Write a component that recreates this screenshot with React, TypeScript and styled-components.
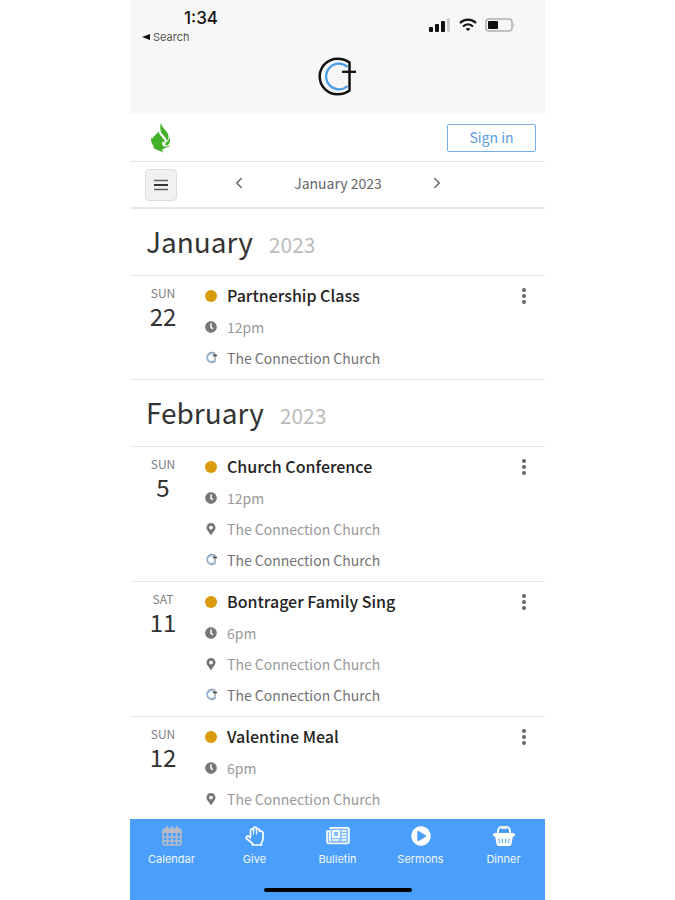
import React from "react";
import styled, { createGlobalStyle } from "styled-components";
import { FaClock, FaMapMarkerAlt, FaPlayCircle } from "react-icons/fa";
import { ChevronLeft, ChevronRight } from "lucide-react";

const GlobalStyle = createGlobalStyle`
  * { box-sizing: border-box; }
  body {
    margin: 0;
    background: #fff;
    font-family: "Noto Sans CJK JP", "Noto Sans", sans-serif;
    color: #222;
  }
  button { font: inherit; color: inherit; background: none; border: 0; padding: 0; cursor: pointer; }
  h1, h2, h3, p { margin: 0; font-weight: 400; }
  svg { display: block; }
`;

const Shell = styled.div`
  max-width: 415px;
  height: 100vh;
  margin: 0 auto;
  display: flex;
  flex-direction: column;
`;

const TopArea = styled.header`
  background: #f7f7f7;
  height: 114px;
  flex: none;
  padding: 8px 30px 0 12px;
  font-family: Inter, sans-serif;
`;

const StatusRow = styled.div`
  display: flex;
  justify-content: space-between;
  height: 36px;
`;

const Clock = styled.div`
  padding-left: 42px;
  font-size: 17px;
  line-height: 20px;
  font-weight: 500;
  color: #111;
`;

const BackLink = styled.a`
  display: flex;
  align-items: center;
  gap: 3px;
  font-size: 11px;
  line-height: 18px;
  color: #555;
  text-decoration: none;
`;

const Signals = styled.div`
  display: flex;
  gap: 8px;
  padding-top: 10px;
`;

const LogoWrap = styled.div`
  display: flex;
  justify-content: center;
  padding: 13px 0 0 18px;
`;

const BrandBar = styled.div`
  flex: none;
  display: flex;
  justify-content: space-between;
  align-items: center;
  height: 48px;
  padding: 0 9px 0 20px;
  border-bottom: 1px solid #e2e2e2;
`;

const SignIn = styled.button`
  && {
    width: 89px;
    height: 28px;
    padding-bottom: 2px;
    border: 1px solid #75aeea;
    border-radius: 2px;
    color: #5a9de2;
    font-size: 14px;
    line-height: 24px;
  }
`;

const MonthBar = styled.nav`
  flex: none;
  display: flex;
  align-items: center;
  height: 47px;
  padding: 0 15px;
  border-bottom: 2px solid #e8e8e8;
  color: #666;
`;

const MenuButton = styled.button`
  && {
    display: grid;
    place-items: center;
    width: 32px;
    height: 32px;
    background: #f1f1f1;
    border: 1px solid #dcdcdc;
    border-radius: 4px;
    color: #333;
  }
`;

const MonthPicker = styled.div`
  display: flex;
  align-items: center;
  justify-content: space-between;
  width: 216px;
  margin-left: 53px;
  padding-bottom: 4px;
  font-size: 14px;
  line-height: 20px;
`;

const List = styled.main`
  flex: 1;
  min-height: 0;
  overflow-y: auto;
  scrollbar-width: none;
`;

const MonthTitle = styled.h2`
  display: flex;
  align-items: baseline;
  gap: 16px;
  height: 67px;
  padding: 0 16px;
  border-bottom: 1px solid #e8e8e8;
  font-size: 28px;
  line-height: 64px;
  color: #333;
`;

const Year = styled.span`
  font-size: 21px;
  color: #bbb;
`;

const EventRow = styled.article`
  display: flex;
  padding: 4px 14px 6px 16px;
  border-bottom: 1px solid #e8e8e8;
`;

const DateBox = styled.div`
  width: 34px;
  margin-right: 24px;
  text-align: center;
`;

const Weekday = styled.div`
  padding-top: 4px;
  font-size: 12px;
  line-height: 18px;
  color: #808080;
`;

const Day = styled.div`
  font-size: 24px;
  line-height: 28px;
  color: #333;
`;

const Details = styled.div`
  flex: 1;
`;

const Line = styled.div<{ $tone: string }>`
  display: flex;
  align-items: center;
  gap: 9px;
  height: 31px;
  font-size: 14px;
  line-height: 22px;
  color: ${(p) => p.$tone};
`;

const IconSlot = styled.span`
  display: grid;
  place-items: center;
  width: 14px;
  color: #777;
`;

const Dot = styled.span`
  width: 12px;
  height: 12px;
  border-radius: 50%;
  background: #d99a0b;
`;

const EventName = styled.h3`
  padding-bottom: 2px;
  font-size: 16px;
  font-weight: 500;
`;

const MoreButton = styled.button`
  && {
    display: grid;
    place-items: center;
    width: 14px;
    height: 31px;
    color: #666;
  }
`;

const TabBar = styled.nav`
  flex: none;
  height: 81px;
  background: #4a9ffc;
  font-family: Inter, sans-serif;
`;

const Tabs = styled.div`
  display: grid;
  grid-template-columns: repeat(5, 1fr);
  height: 69px;
`;

const Tab = styled.a<{ $active?: boolean }>`
  display: flex;
  flex-direction: column;
  align-items: center;
  gap: 5px;
  padding-top: 7px;
  color: #f2f8ff;
  text-decoration: none;
  font-size: 11px;
  line-height: 16px;
  svg { color: ${(p) => (p.$active ? "#b9bcc8" : "#fff")}; }
`;

const HomeIndicator = styled.div`
  width: 148px;
  height: 4px;
  margin: 0 auto;
  border-radius: 2px;
  background: #000;
`;

const ChurchLogo = () => (
  <svg width="39" height="39" viewBox="0 0 39 39" fill="none" role="img" aria-label="The Connection Church">
    <path d="M31.500 5.500C28 2.800 24 1.700 19.500 1.700A17.800 17.800 0 1 0 19.500 37.300C24 37.300 28 36.200 31.500 33.500Z" stroke="#111" strokeWidth="2.500" strokeLinejoin="round" />
    <path d="M29.500 10A12.800 12.800 0 1 0 29.500 29" stroke="#4a9be8" strokeWidth="2.300" />
    <path d="M24 14.800H38" stroke="#111" strokeWidth="2.300" />
  </svg>
);

const Flame = () => (
  <svg width="22" height="30" viewBox="0 0 22 30" fill="#43b02a" role="img" aria-label="Flame">
    <path d="M11 0C12.500 6 18 8 18.500 13C18.700 15 18 17 17 18C16 13.500 11.500 12 10.500 7.500C10 4.500 10.300 2 11 0Z" />
    <path d="M8.500 8C9 13 14.500 14.500 15 19.500C12.500 17.500 11.500 20 12.500 22C13.500 24 17 24.500 20 22C19 25 15 24.500 13 26C12 27 12.500 28.500 13 30C10.500 27 5.500 27.500 3 24L4 23.500C1.500 21 .5 18 1.500 14.500L3 15.500C3 12.500 7.500 11.500 8.500 8Z" />
    <path d="M19.500 14C20.800 17.500 20 21 17 22.500C15 22.500 14.500 21 15.800 19.800C18 18 19.300 17 19.500 14Z" />
  </svg>
);

const MiniLogo = () => (
  <svg width="12" height="13" viewBox="0 0 12 13" fill="none" aria-hidden="true">
    <path d="M10 2.500A5 5 0 1 0 10 10.500Z" stroke="#979da6" strokeWidth="1.400" strokeLinejoin="round" />
    <path d="M9 4A3.800 3.800 0 1 0 9 9.500" stroke="#8dbbe8" strokeWidth="1.200" />
    <path d="M8 4.500H12" stroke="#444" strokeWidth="1.500" />
  </svg>
);

const CalendarIcon = () => (
  <svg width="20" height="20" viewBox="0 0 20 20" fill="none" stroke="currentColor" aria-hidden="true">
    <rect x="1" y="3" width="18" height="16" rx="1.500" strokeWidth="1.500" />
    <path d="M1 3.500H19V7H1Z" fill="currentColor" stroke="none" />
    <path d="M5 1.500V5M10 1.500V5M15 1.500V5" strokeWidth="2.400" strokeLinecap="round" />
    <path d="M5.500 7V19M10 7V19M14.500 7V19M1 11H19M1 15H19" strokeWidth="1.500" />
  </svg>
);

const HandIcon = () => (
  <svg width="20" height="20" viewBox="0 0 20 20" fill="none" stroke="currentColor" strokeWidth="1.700" strokeLinecap="round" strokeLinejoin="round" aria-hidden="true">
    <path d="M5.500 11V4.500Q5.500 3 7 3Q8.500 3 8.500 4V2.500Q8.500 1 10 1Q11.500 1 11.500 2.500V3.500Q12 2.500 13.200 2.800Q14.500 3 14.500 4.500V5.500Q15.500 4.700 16.700 5.200Q18 5.800 18 7V12.500Q18 15 16.500 16.500V19H7.500V17.500L1.500 12.500Q.7 11.500 1.700 10.500Q2.700 9.700 4 10.500L5.500 12" />
    <path d="M8.500 4V8M11.500 3.500V8" strokeWidth="1.200" />
  </svg>
);

const BulletinIcon = () => (
  <svg width="24" height="20" viewBox="0 0 24 20" fill="none" stroke="currentColor" aria-hidden="true">
    <path d="M4 3Q4 1.800 5.200 1.800H21.500Q23 1.800 23 3.300V15.500Q23 17.500 21 17.500H3Q1 17.500 1 15.500V5H4V15.500" strokeWidth="1.600" fill="#ffffff55" />
    <rect x="7" y="5" width="6" height="6" strokeWidth="1.800" />
    <path d="M15.500 5H20.500M15.500 8H20.500M15.500 11H20.500M6.500 14H13M15.500 14H20.500" strokeWidth="1.700" />
  </svg>
);

const BasketIcon = () => (
  <svg width="22" height="20" viewBox="0 0 22 20" fill="none" aria-hidden="true">
    <path d="M4.500 8L5.500 3Q6 1.200 8 1.200H14Q16 1.200 16.500 3L17.500 8" stroke="currentColor" strokeWidth="1.800" />
    <rect x="8" y="0" width="6" height="3" rx="1" fill="currentColor" />
    <rect x="0" y="7" width="22" height="3.500" rx="1.500" fill="currentColor" />
    <path d="M2 10H20L18.500 18Q18.200 20 16.500 20H5.500Q3.800 20 3.500 18Z" fill="currentColor" />
    <path d="M6 12.500L6.500 17M9.300 12.500V17M12.700 12.500V17M16 12.500L15.500 17" stroke="#4a9ffc" strokeWidth="1" />
  </svg>
);

const MenuIcon = () => (
  <svg width="14" height="12" viewBox="0 0 14 12" stroke="currentColor" aria-hidden="true">
    <path d="M0 1.500H14M0 10.500H14" strokeWidth="1.500" opacity=".75" />
    <path d="M0 6H14" strokeWidth="2" />
  </svg>
);

const MoreIcon = () => (
  <svg width="4" height="16" viewBox="0 0 4 16" fill="currentColor" aria-hidden="true">
    <circle cx="2" cy="2" r="2" />
    <circle cx="2" cy="8" r="2" />
    <circle cx="2" cy="14" r="2" />
  </svg>
);

type EventInfo = {
  weekday: string;
  day: number;
  name: string;
  time: string;
  place?: string;
  calendar?: string;
};

const church = "The Connection Church";

const months: { name: string; events: EventInfo[] }[] = [
  {
    name: "January",
    events: [{ weekday: "SUN", day: 22, name: "Partnership Class", time: "12pm", calendar: church }],
  },
  {
    name: "February",
    events: [
      { weekday: "SUN", day: 5, name: "Church Conference", time: "12pm", place: church, calendar: church },
      { weekday: "SAT", day: 11, name: "Bontrager Family Sing", time: "6pm", place: church, calendar: church },
      { weekday: "SUN", day: 12, name: "Valentine Meal", time: "6pm", place: church },
    ],
  },
];

const tabs = [
  { label: "Calendar", icon: <CalendarIcon /> },
  { label: "Give", icon: <HandIcon /> },
  { label: "Bulletin", icon: <BulletinIcon /> },
  { label: "Sermons", icon: <FaPlayCircle size={20} /> },
  { label: "Dinner", icon: <BasketIcon /> },
];

const Event = ({ event }: { event: EventInfo }) => (
  <EventRow>
    <DateBox>
      <Weekday>{event.weekday}</Weekday>
      <Day>{event.day}</Day>
    </DateBox>
    <Details>
      <Line $tone="#222">
        <IconSlot><Dot /></IconSlot>
        <EventName>{event.name}</EventName>
      </Line>
      <Line $tone="#999">
        <IconSlot><FaClock size={12} /></IconSlot>
        {event.time}
      </Line>
      {event.place && (
        <Line $tone="#999">
          <IconSlot><FaMapMarkerAlt size={12} /></IconSlot>
          {event.place}
        </Line>
      )}
      {event.calendar && (
        <Line $tone="#737373">
          <IconSlot><MiniLogo /></IconSlot>
          {event.calendar}
        </Line>
      )}
    </Details>
    <MoreButton aria-label={`More options for ${event.name}`}>
      <MoreIcon />
    </MoreButton>
  </EventRow>
);

export default function App() {
  return (
    <>
      <GlobalStyle />
      <Shell>
        <TopArea>
          <StatusRow>
            <div>
              <Clock>1:34</Clock>
              <BackLink href="#search">
                <svg width="8" height="6" viewBox="0 0 8 6" aria-hidden="true"><path d="M0 3L8 0V6Z" fill="#111" /></svg>
                Search
              </BackLink>
            </div>
            <Signals>
              <svg width="22" height="14" viewBox="0 0 22 14" fill="#111" aria-hidden="true">
                <rect x="0" y="9" width="4" height="5" rx="1" />
                <rect x="6" y="6" width="4" height="8" rx="1" />
                <rect x="12" y="3" width="4" height="11" rx="1" />
                <rect x="18" y="0" width="3" height="14" rx="1" fill="#ccc" />
              </svg>
              <svg width="18" height="14" viewBox="0 0 18 14" fill="none" stroke="#111" strokeWidth="2.200" aria-hidden="true">
                <path d="M1 5C5.500 .5 12.500 .5 17 5M4 8.500C7 5.500 11 5.500 14 8.500" />
                <path d="M9 13L6.500 10.800Q9 9 11.500 10.800Z" fill="#111" stroke="none" />
              </svg>
              <svg width="30" height="14" viewBox="0 0 30 14" fill="none" aria-hidden="true">
                <rect x="1" y="1" width="26" height="12" rx="3" stroke="#b0b0b0" strokeWidth="1.500" />
                <rect x="3" y="3" width="10" height="8" rx="1" fill="#111" />
                <path d="M28.500 5Q30.500 7 28.500 9Z" fill="#b0b0b0" />
              </svg>
            </Signals>
          </StatusRow>
          <LogoWrap><ChurchLogo /></LogoWrap>
        </TopArea>
        <BrandBar>
          <Flame />
          <SignIn>Sign in</SignIn>
        </BrandBar>
        <MonthBar>
          <MenuButton aria-label="Menu"><MenuIcon /></MenuButton>
          <MonthPicker>
            <button aria-label="Previous month"><ChevronLeft size={18} /></button>
            <span>January 2023</span>
            <button aria-label="Next month"><ChevronRight size={18} /></button>
          </MonthPicker>
        </MonthBar>
        <List>
          {months.map((month) => (
            <section key={month.name}>
              <MonthTitle>{month.name}<Year>2023</Year></MonthTitle>
              {month.events.map((event) => <Event key={event.name} event={event} />)}
            </section>
          ))}
        </List>
        <TabBar>
          <Tabs>
            {tabs.map((tab, i) => (
              <Tab key={tab.label} href={`#${tab.label.toLowerCase()}`} $active={i === 0}>
                {tab.icon}
                {tab.label}
              </Tab>
            ))}
          </Tabs>
          <HomeIndicator />
        </TabBar>
      </Shell>
    </>
  );
}
